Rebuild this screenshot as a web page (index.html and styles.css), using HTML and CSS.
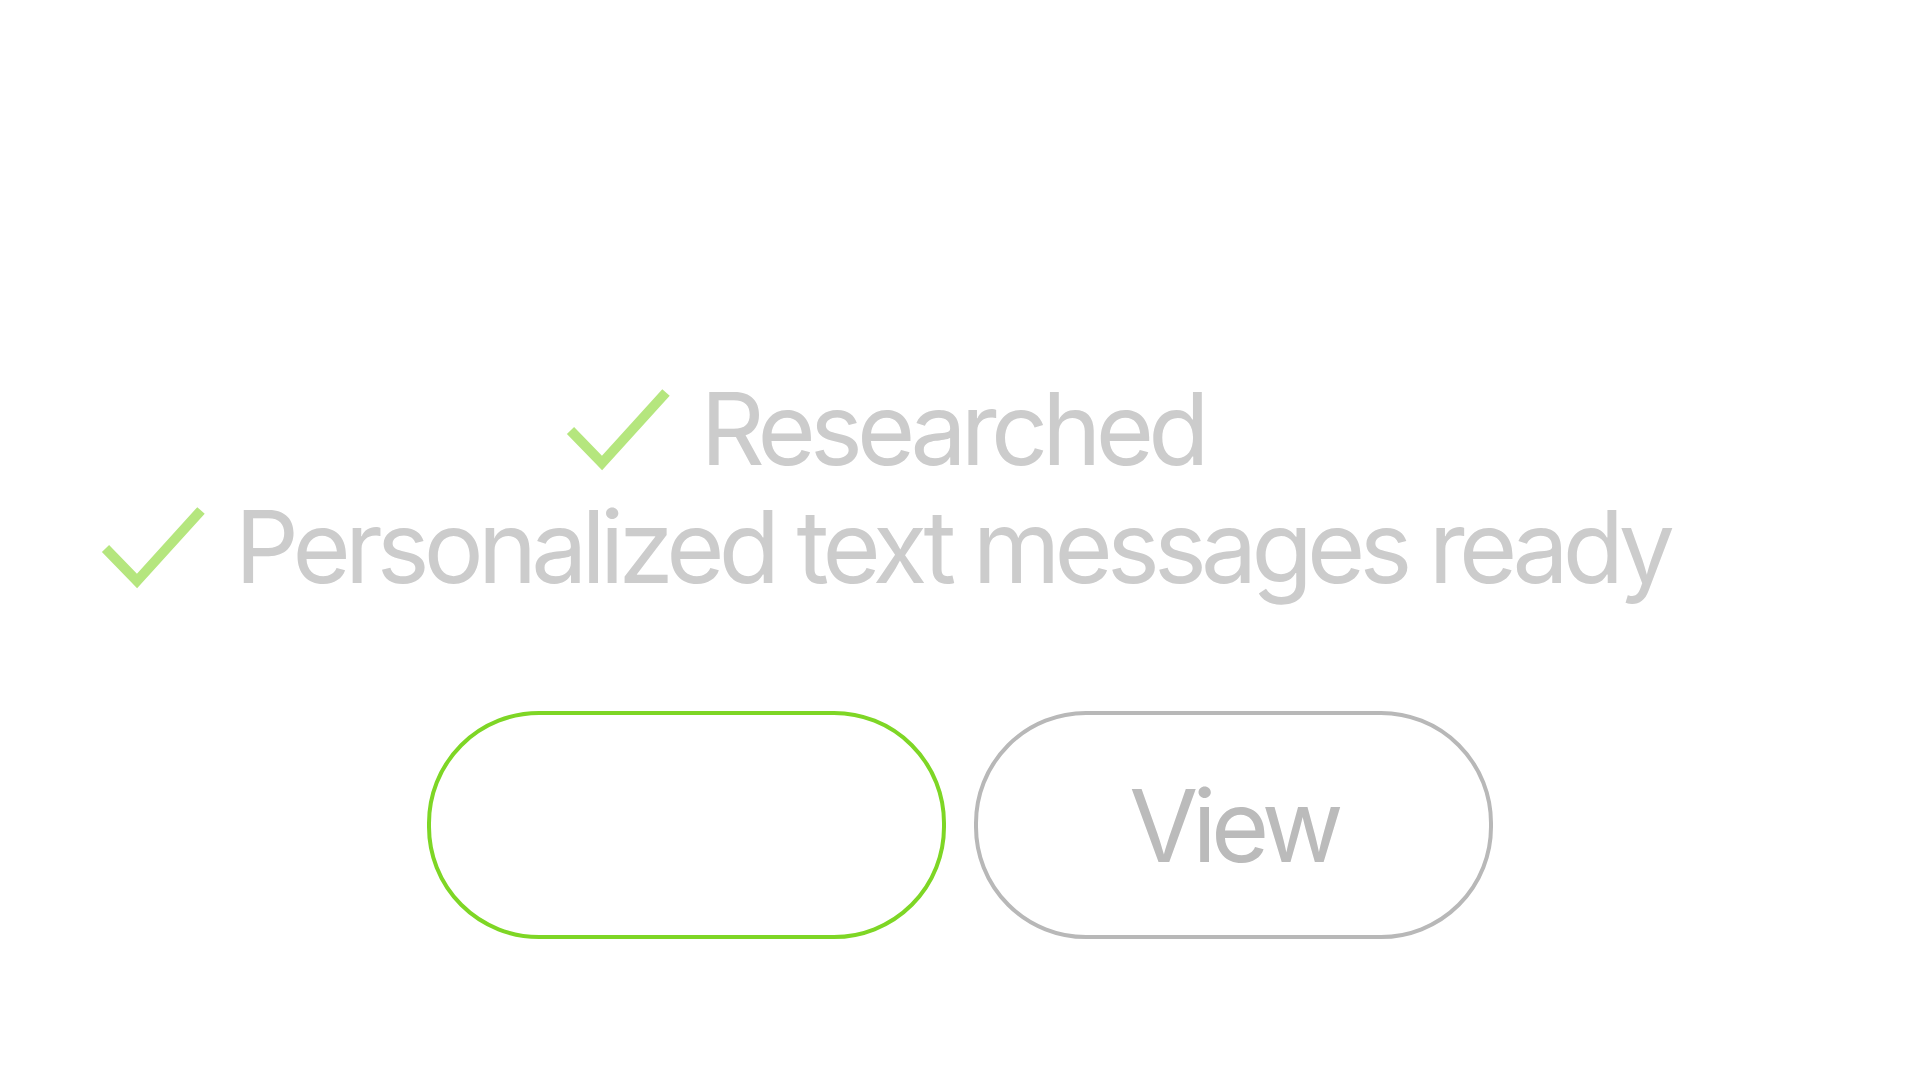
FILE: index.html
```html
<!DOCTYPE html>
<html lang="en">
<head>
    <meta charset="UTF-8">
    <meta name="viewport" content="width=device-width, initial-scale=1.0">
    <title>Messages</title>
    <link rel="stylesheet" href="styles.css">
</head>
<body>
    <div class="status-list">
        <div class="status-row">
            <svg class="check" viewBox="0 0 110 87" width="110" height="87">
                <polyline points="6.5,44.5 38,77 102,6.5" />
            </svg>
            <span class="status-text">Researched</span>
        </div>
        <div class="status-row">
            <svg class="check" viewBox="0 0 110 87" width="110" height="87">
                <polyline points="6.5,44.5 38,77 102,6.5" />
            </svg>
            <span class="status-text">Personalized text messages ready</span>
        </div>
    </div>

    <div class="actions">
        <button class="btn btn-primary"></button>
        <button class="btn btn-secondary">View</button>
    </div>
</body>
</html>
```

FILE: styles.css
```css
* {
    box-sizing: border-box;
    margin: 0;
    padding: 0;
}

body {
    font-family: 'Inter', 'Helvetica Neue', Arial, sans-serif;
    background: #ffffff;
    min-height: 100vh;
    padding-top: 370px;
    display: flex;
    flex-direction: column;
    align-items: center;
}

.status-list {
    display: flex;
    flex-direction: column;
    width: 100%;
}

.status-row {
    display: flex;
    align-items: center;
    justify-content: center;
    gap: 26px;
    padding-right: 152px;
}

.check {
    flex-shrink: 0;
    fill: none;
    stroke: #b5e67e;
    stroke-width: 10;
    stroke-linejoin: miter;
    stroke-linecap: butt;
}

.status-text {
    font-size: 100px;
    line-height: 118px;
    letter-spacing: -0.058em;
    color: #cccccc;
    white-space: nowrap;
}

.actions {
    display: flex;
    gap: 28px;
    margin-top: 105px;
}

.btn {
    width: 519px;
    height: 228px;
    border-radius: 112px;
    background: #ffffff;
    font-family: inherit;
    font-size: 100px;
    letter-spacing: -0.058em;
    cursor: pointer;
}

.btn-primary {
    border: 4px solid #7ed625;
}

.btn-secondary {
    border: 4px solid #b8b8b8;
    color: #bbbbbb;
}
```
